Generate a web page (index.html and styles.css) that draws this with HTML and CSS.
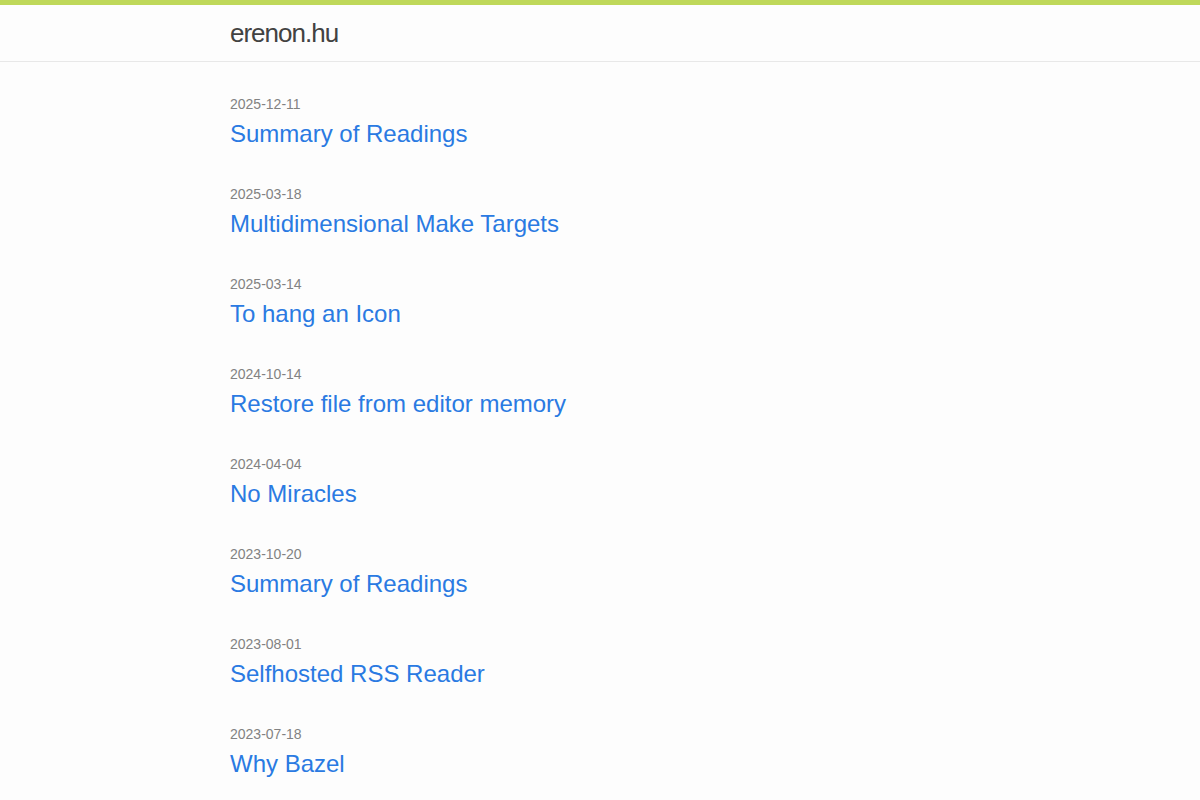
FILE: index.html
```html
<!DOCTYPE html>
<html lang="en">
<head>
<meta charset="utf-8">
<title>erenon.hu</title>
<link rel="stylesheet" href="styles.css">
</head>
<body>
<header class="site-header">
  <div class="wrapper">
    <a class="site-title" href="#">erenon.hu</a>
  </div>
</header>
<main class="page-content">
  <div class="wrapper">
    <ul class="post-list">
      <li><span class="post-meta">2025-12-11</span><h3><a class="post-link" href="#">Summary of Readings</a></h3></li>
      <li><span class="post-meta">2025-03-18</span><h3><a class="post-link" href="#">Multidimensional Make Targets</a></h3></li>
      <li><span class="post-meta">2025-03-14</span><h3><a class="post-link" href="#">To hang an Icon</a></h3></li>
      <li><span class="post-meta">2024-10-14</span><h3><a class="post-link" href="#">Restore file from editor memory</a></h3></li>
      <li><span class="post-meta">2024-04-04</span><h3><a class="post-link" href="#">No Miracles</a></h3></li>
      <li><span class="post-meta">2023-10-20</span><h3><a class="post-link" href="#">Summary of Readings</a></h3></li>
      <li><span class="post-meta">2023-08-01</span><h3><a class="post-link" href="#">Selfhosted RSS Reader</a></h3></li>
      <li><span class="post-meta">2023-07-18</span><h3><a class="post-link" href="#">Why Bazel</a></h3></li>
    </ul>
  </div>
</main>
</body>
</html>
```
FILE: styles.css
```css
* { box-sizing: border-box; }
html, body { margin: 0; padding: 0; }
body {
  font-family: "Liberation Sans", Arial, sans-serif;
  font-size: 16px;
  line-height: 1.5;
  color: #111;
  background: #fdfdfd;
}
.wrapper {
  max-width: 800px;
  margin: 0 auto;
  padding: 0 30px;
}
.site-header {
  border-top: 5px solid #bfd85a;
  border-bottom: 1px solid #e8e8e8;
  min-height: 62px;
}
.site-title {
  display: inline-block;
  font-size: 26px;
  font-weight: 300;
  line-height: 56px;
  letter-spacing: -1px;
  color: #424242;
  text-decoration: none;
}
.page-content {
  padding: 30px 0;
}
.post-list {
  list-style: none;
  margin: 0;
  padding: 0;
}
.post-list li {
  margin-bottom: 30px;
}
.post-meta {
  font-size: 14px;
  color: #828282;
}
.post-list h3 {
  margin: 0 0 15px;
  font-size: 24px;
  font-weight: 400;
  line-height: 1.5;
}
.post-link {
  display: block;
  color: #2a7ae2;
  text-decoration: none;
}
```
